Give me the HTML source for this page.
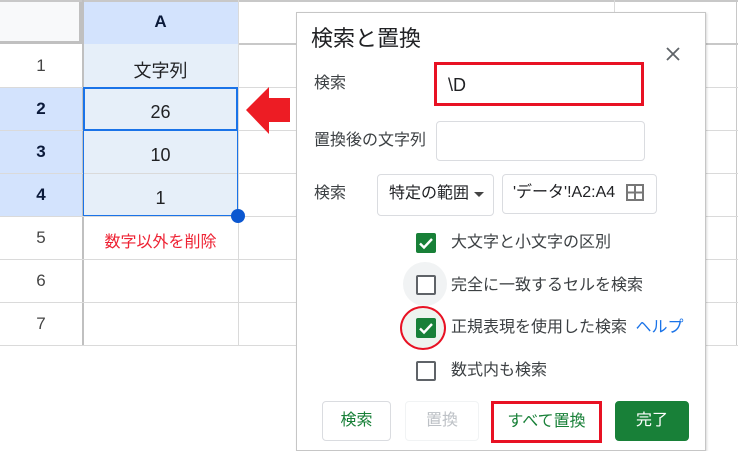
<!DOCTYPE html>
<html><head><meta charset="utf-8"><style>
*{box-sizing:border-box;margin:0;padding:0}
body{width:738px;height:451px;overflow:hidden;background:#fff;position:relative;font-family:"Liberation Sans","Noto Sans CJK JP",sans-serif;color:#202124}
.a{position:absolute}
.hl{position:absolute;height:1px;background:#dadada}
.vl{position:absolute;width:1px;background:#dadada}
.rn{position:absolute;left:0;width:82px;text-align:center;font-size:17px;color:#444}
.cb{position:absolute;left:416px;width:20px;height:20px;border-radius:2px}
.on{background:#188038}
.off{border:2px solid #5f6368;background:#fff}
.lbl{position:absolute;font-size:16px;color:#3c4043;line-height:20px}
.btn{position:absolute;top:401px;height:40px;border:1px solid #dadce0;border-radius:4px;font-size:16px;text-align:center;line-height:38px}
</style></head><body>
<div class="a" style="left:0;top:0;width:82px;height:44px;background:#f8f9fa;border-right:3px solid #c0c0c0;border-bottom:3px solid #c0c0c0"></div>
<div class="a" style="left:83px;top:0;width:155px;height:44px;background:#d3e3fd;font-weight:bold;font-size:17px;text-align:center;line-height:44px;color:#0b1a3a">A</div>
<div class="a" style="left:0;top:0;width:738px;height:2px;background:#c8c8c8"></div>
<div class="a" style="left:238px;top:43px;width:500px;height:2px;background:#c8c8c8"></div>
<div class="a" style="left:0;top:87px;width:82px;height:129px;background:#d3e3fd"></div>
<div class="a" style="left:83px;top:44px;width:155px;height:172px;background:#e6eff9"></div>
<div class="vl" style="left:82px;top:0;height:346px;background:#c0c0c0;width:2px"></div>
<div class="vl" style="left:238px;top:0;height:346px"></div>
<div class="vl" style="left:614px;top:0;height:14px"></div>
<div class="vl" style="left:736px;top:0;height:346px;background:#c8c8c8"></div>
<div class="hl" style="left:0;top:87px;width:738px"></div>
<div class="hl" style="left:0;top:130px;width:738px"></div>
<div class="hl" style="left:0;top:173px;width:738px"></div>
<div class="hl" style="left:0;top:216px;width:738px"></div>
<div class="hl" style="left:0;top:259px;width:738px"></div>
<div class="hl" style="left:0;top:302px;width:738px"></div>
<div class="hl" style="left:0;top:345px;width:738px"></div>
<div class="rn" style="top:56px">1</div>
<div class="rn" style="top:99px;font-weight:bold;color:#0b1a3a">2</div>
<div class="rn" style="top:142px;font-weight:bold;color:#0b1a3a">3</div>
<div class="rn" style="top:185px;font-weight:bold;color:#0b1a3a">4</div>
<div class="rn" style="top:228px">5</div>
<div class="rn" style="top:271px">6</div>
<div class="rn" style="top:314px">7</div>
<div class="a" style="left:83px;top:87px;width:155px;height:129px;border:1px solid #1a73e8"></div>
<div class="a" style="left:83px;top:87px;width:155px;height:44px;border:2px solid #1a73e8"></div>
<div class="a" style="left:231px;top:209px;width:14px;height:14px;border-radius:50%;background:#0b57d0"></div>
<div class="a" style="left:83px;top:60px;width:155px;text-align:center;font-size:18px;line-height:22px">文字列</div>
<div class="a" style="left:83px;top:102px;width:155px;text-align:center;font-size:18px">26</div>
<div class="a" style="left:83px;top:145px;width:155px;text-align:center;font-size:18px">10</div>
<div class="a" style="left:83px;top:188px;width:155px;text-align:center;font-size:18px">1</div>
<div class="a" style="left:83px;top:233px;width:155px;text-align:center;font-size:16px;line-height:20px;color:#ee2233">数字以外を削除</div>
<svg class="a" style="left:244px;top:86px" width="48" height="50"><polygon points="2,24 25,1 25,12 46,12 46,36 25,36 25,48" fill="#ed1c24"/></svg>
<div class="a" style="left:296px;top:12px;width:410px;height:439px;background:#fff;border:1px solid #c6c6c6;box-shadow:1px 1px 2px rgba(0,0,0,.15)"></div>
<div class="a" style="left:311px;top:26px;font-size:22px;line-height:26px;color:#202124">検索と置換</div>
<svg class="a" style="left:666px;top:47px" width="14" height="14"><path d="M1 1L13 13M13 1L1 13" stroke="#5f6368" stroke-width="1.8"/></svg>
<div class="lbl" style="left:314px;top:74px">検索</div>
<div class="a" style="left:434px;top:62px;width:210px;height:44px;border:3px solid #e81123"></div>
<div class="a" style="left:448px;top:75px;font-size:18px">\D</div>
<div class="lbl" style="left:314px;top:131px">置換後の文字列</div>
<div class="a" style="left:436px;top:121px;width:209px;height:40px;border:1px solid #dadce0;border-radius:4px"></div>
<div class="lbl" style="left:314px;top:184px">検索</div>
<div class="a" style="left:377px;top:174px;width:117px;height:42px;border:1px solid #dadce0;border-radius:4px"></div>
<div class="lbl" style="left:389px;top:184px;color:#202124">特定の範囲</div>
<svg class="a" style="left:474px;top:192px" width="10" height="6"><path d="M0 0H10L5 5Z" fill="#444"/></svg>
<div class="a" style="left:502px;top:174px;width:155px;height:40px;border:1px solid #dadce0;border-radius:4px"></div>
<div class="a" style="left:513px;top:183px;font-size:16px;line-height:20px;color:#202124">'データ'!A2:A4</div>
<svg class="a" style="left:626px;top:184px" width="18" height="17"><rect x="1" y="1" width="16" height="15" fill="none" stroke="#777" stroke-width="2"/><path d="M9 1V16M1 8.5H17" stroke="#777" stroke-width="2"/></svg>
<div class="a" style="left:403px;top:262px;width:44px;height:44px;border-radius:50%;background:#f1f3f4"></div>
<div class="a" style="left:400px;top:306px;width:46px;height:44px;border-radius:50%;border:2px solid #e81123;background:#eef4ef"></div>
<div class="cb on" style="top:233px"></div>
<div class="cb off" style="top:275px"></div>
<div class="cb on" style="top:318px"></div>
<div class="cb off" style="top:361px"></div>
<svg class="a" style="left:416px;top:233px" width="20" height="20"><path d="M4 10.5L8 14.5L16 6" stroke="#fff" stroke-width="2.4" fill="none"/></svg>
<svg class="a" style="left:416px;top:318px" width="20" height="20"><path d="M4 10.5L8 14.5L16 6" stroke="#fff" stroke-width="2.4" fill="none"/></svg>
<div class="lbl" style="left:451px;top:233px">大文字と小文字の区別</div>
<div class="lbl" style="left:451px;top:276px">完全に一致するセルを検索</div>
<div class="lbl" style="left:451px;top:318px">正規表現を使用した検索 <span style="color:#1a73e8;margin-left:4px">ヘルプ</span></div>
<div class="lbl" style="left:451px;top:361px">数式内も検索</div>
<div class="btn" style="left:322px;width:69px;color:#188038">検索</div>
<div class="btn" style="left:405px;width:74px;color:#bdc1c6;border-color:#f1f3f4">置換</div>
<div class="btn" style="left:491px;width:111px;height:42px;border:3px solid #e81123;border-radius:0;color:#188038;line-height:36px">すべて置換</div>
<div class="btn" style="left:615px;width:74px;background:#188038;border-color:#188038;color:#fff">完了</div>
</body></html>
